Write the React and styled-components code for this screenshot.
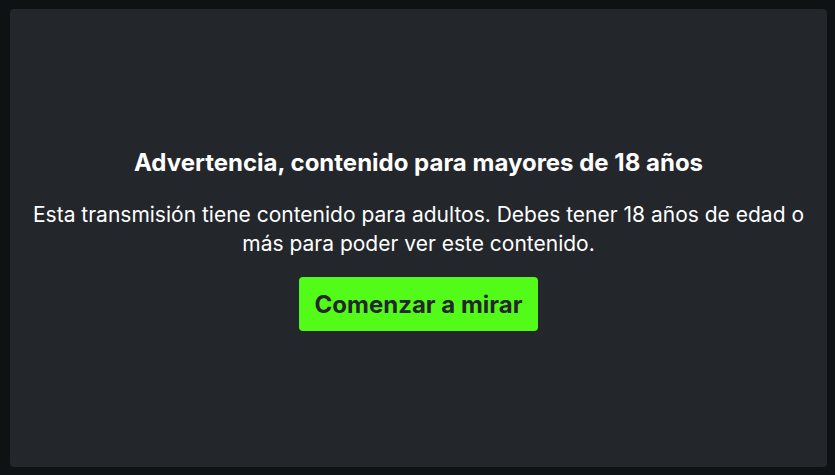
import React from 'react';
import styled, { createGlobalStyle } from 'styled-components';

const GlobalStyle = createGlobalStyle`
    html, body {
        margin: 0;
        padding: 0;
        background: #0e1215;
        font-family: Inter, "Noto Sans", sans-serif;
    }
`;

const Page = styled.div`
    box-sizing: border-box;
    width: 835px;
    height: 475px;
    padding: 9px 8px 8px 10px;
    display: flex;
`;

const Card = styled.div`
    flex: 1;
    background: #23262b;
    border-radius: 4px;
    display: flex;
    flex-direction: column;
    align-items: center;
    justify-content: center;
    padding: 2px 16px 0 16px;
    text-align: center;
`;

const Title = styled.h2`
    margin: 0 0 21px 0;
    font-size: 24px;
    font-weight: 700;
    line-height: 32px;
    color: #ffffff;
`;

const Body = styled.p`
    margin: 0 0 19px 0;
    font-size: 21px;
    line-height: 29px;
    color: #ffffff;
`;

const WatchButton = styled.button`
    border: none;
    border-radius: 4px;
    background: #53fc18;
    color: #24262b;
    font-family: Inter, sans-serif;
    font-size: 24px;
    font-weight: 700;
    height: 54px;
    padding: 0 16px;
    cursor: pointer;
`;

const App = () => (
    <>
        <GlobalStyle />
        <Page>
            <Card>
                <Title>Advertencia, contenido para mayores de 18 años</Title>
                <Body>
                    Esta transmisión tiene contenido para adultos. Debes tener 18 años de edad o más para poder ver este contenido.
                </Body>
                <WatchButton>Comenzar a mirar</WatchButton>
            </Card>
        </Page>
    </>
);

export default App;
